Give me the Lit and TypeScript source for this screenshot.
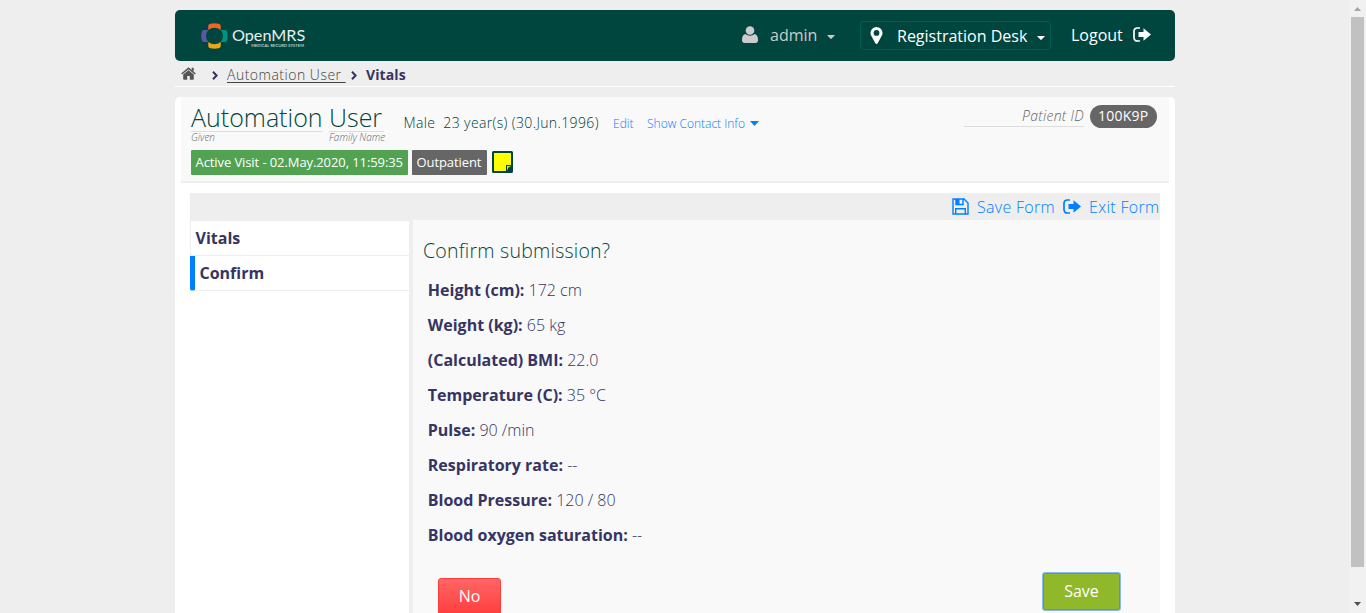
import { LitElement, html, css, svg } from "lit";
import { customElement } from "lit/decorators.js";

const signOut = svg`
  <path d="M7 1H4.2A3.2 3.2 0 0 0 1 4.2v6.6A3.2 3.2 0 0 0 4.2 14H7" fill="none" stroke="currentColor" stroke-width="1.7"/>
  <path d="M5.500 5h5V1.2L18 7.500l-7.500 6.300V10h-5z" fill="currentColor"/>`;

const vitals: [string, string][] = [
  ["Height (cm):", "172 cm"],
  ["Weight (kg):", "65 kg"],
  ["(Calculated) BMI:", "22.0"],
  ["Temperature (C):", "35 °C"],
  ["Pulse:", "90 /min"],
  ["Respiratory rate:", "--"],
  ["Blood Pressure:", "120 / 80"],
  ["Blood oxygen saturation:", "--"],
];

@customElement("app-root")
export class AppRoot extends LitElement {
  static styles = css`
    :host {
      display: flex;
      height: 613px;
      overflow: hidden;
      background: #eee;
      font-family: "Open Sans", sans-serif;
      font-size: 16px;
      font-weight: 300;
      color: #363463;
      white-space: nowrap;
    }
    * { box-sizing: border-box; }
    svg { display: block; flex: none; }
    .page { flex: 1; padding: 10px 174px 0 175px; min-width: 0; }
    .top {
      height: 51px;
      background: #00463f;
      border-radius: 5px;
      display: flex;
      align-items: center;
      color: #fff;
      font-weight: 400;
      padding: 0 24px 1px 26px;
    }
    .logo { margin-top: 1px; }
    .brand { margin-left: 4px; padding-top: 4px; width: 74px; color: #e8efee; }
    .name { font: 400 16.200px/17px Lato, sans-serif; height: 18px; }
    .tag { font: 400 4px/4px Lato, sans-serif; text-align: right; padding-right: 2px; letter-spacing: 0.1px; }
    .spacer { flex: 1; }
    .user { color: #ccc; display: flex; align-items: center; width: 118px; }
    .user span { margin-left: 12px; width: 57px; }
    .user svg { margin-top: -1px; }
    .user .caret { margin-top: 4px; }
    .place {
      display: flex;
      align-items: center;
      width: 191px;
      height: 29px;
      border: 1px solid #005e50;
      border-radius: 3px;
      padding-left: 9px;
      margin-top: 1px;
    }
    .place svg { margin-top: -1px; }
    .place span { margin-left: 14px; width: 140px; }
    .place .caret { margin-top: 4px; }
    .logout { margin-left: 20px; width: 62px; }
    .out { margin-top: -2px; }
    .crumbs {
      height: 26px;
      border-bottom: 1px solid #fff;
      display: flex;
      align-items: center;
      font-size: 14px;
      padding: 2px 0 0 6px;
    }
    .crumbs u { color: #444; width: 118px; margin: 0 6px 0 9px; text-underline-offset: 2px; white-space: pre; letter-spacing: 0.5px; }
    .crumbs b { font-weight: 700; margin-left: 9px; letter-spacing: 0.1px; }
    .chev { margin-top: 2px; }
    .home { margin-right: 16px; margin-top: -3px; }
    .panel { margin-top: 10px; height: 530px; background: #fff; border-radius: 5px; padding: 0 6px; }
    .patient {
      height: 86px;
      background: #f9f9f9;
      border-bottom: 2px solid #eee;
      padding: 6px 12px 0 10px;
      color: #00463f;
    }
    .id-row { display: flex; height: 47px; }
    .part { display: flex; flex-direction: column; }
    .part h1 { margin: 0; font-size: 25px; font-weight: 300; line-height: 28px; height: 29px; border-bottom: 1px solid #ddd; }
    .part em, .pid em { color: #666; }
    .part em { font-size: 10px; line-height: 11px; }
    .given { width: 132px; margin-right: 6px; }
    .family { width: 55px; }
    .gender { font-size: 14px; line-height: 20px; padding-top: 10px; margin-left: 19.500px; width: 209.500px; white-space: pre; letter-spacing: 0.37px; color: #003c36; }
    .link { color: #007fff; font-size: 12px; line-height: 20px; padding-top: 11px; }
    .edit { width: 34px; }
    .contact { width: 103px; }
    .down { margin-top: 18px; }
    .pid { width: 120px; height: 24px; border-bottom: 1px solid #ddd; text-align: right; font-size: 14px; line-height: 26px; letter-spacing: 0.3px; }
    .badge {
      margin: 2px 0 0 6px;
      width: 67px;
      height: 23px;
      line-height: 22px;
      border-radius: 12px;
      background: #666;
      color: #fff;
      padding-left: 8px;
      font-size: 14px;
      font-weight: 400;
      letter-spacing: 0.25px;
    }
    .tags { display: flex; color: #fff; font-size: 13px; font-weight: 400; line-height: 25px; letter-spacing: -0.09px; }
    .tags span { height: 25px; margin-right: 4px; padding-left: 4.500px; border-radius: 1px; }
    .visit { width: 217px; background: #51a351; }
    .outp { width: 75px; background: #666; }
    .note { margin: 1px 0 0 1px; }
    .bar {
      margin: 10px 9px 0;
      height: 27px;
      background: #eee;
      display: flex;
      justify-content: flex-end;
      align-items: center;
      color: #007fff;
      letter-spacing: 0.3px;
    }
    .disk { margin-top: -1px; }
    .save-link { margin-left: 8px; width: 86px; }
    .exit-link { margin-left: 8px; width: 71px; }
    .body { display: flex; margin: 0 9px; height: 393px; }
    nav { width: 219px; border-top: 1px solid #eee; font-weight: 700; }
    nav div { height: 35px; line-height: 34px; border-bottom: 1px solid #eee; padding-left: 4.500px; border-left: 1px solid #eee; }
    nav .on { border-left: 5px solid #007fff; border-bottom-left-radius: 3px; }
    .form { flex: 1; border-left: 4px solid #eee; background: #f9f9f9; padding: 16px 39px 0 10px; }
    h3 { margin: 0 0 7px; font-size: 19.500px; letter-spacing: 0.24px; line-height: 30px; font-weight: 300; color: #00463f; }
    .row { height: 35px; line-height: 34px; padding-left: 4.800px; }
    .row b { font-weight: 700; }
    .actions { display: flex; justify-content: space-between; padding-left: 15px; margin-top: 19px; color: #fff; font-weight: 400; text-align: center; }
    .no {
      margin-top: 6px;
      width: 63px;
      height: 38px;
      line-height: 34px;
      border: 1px solid #ff3d3d;
      border-radius: 3px;
      background: linear-gradient(#ff6666, #ff3d3d);
    }
    .yes {
      width: 79px;
      height: 39px;
      line-height: 37px;
      border: 1px solid #8bb8f4;
      box-shadow: inset 0 0 0 1px #5e9a86;
      border-radius: 3px;
      background: #8fb82a;
    }
    .scroll { width: 17px; background: #f1f1f1; display: flex; flex-direction: column; align-items: center; }
    .thumb { width: 13px; height: 550px; background: #c1c1c1; }
  `;

  private caret() {
    return html`<svg class="caret" width="8" height="4" viewBox="0 0 8 4"><path d="M.6 0h6.800q.6 0 .2.500L4.400 3.700q-.4.400-.8 0L.4.500Q0 0 .6 0z" fill="currentColor"/></svg>`;
  }

  private chevron() {
    return html`<svg class="chev" width="6" height="9" viewBox="0 0 6 9"><path d="M1 .8 4.600 4.500 1 8.200" fill="none" stroke="#363463" stroke-width="2"/></svg>`;
  }

  render() {
    return html`
      <div class="page">
        <header class="top">
          <svg class="logo" width="27" height="26" viewBox="0 0 26 26" preserveAspectRatio="none">
            <path d="M7 7V3Q7 1 9 .7q4-.9 8 0 2 .3 2 2.300v4Q13 2.500 7 7z" fill="#f26522"/>
            <path d="M7 19v4q0 2 2 2.300 4 .9 8 0 2-.3 2-2.300v-4q-6 4.500-12 0z" fill="#eea616"/>
            <path d="M7 7H3Q1 7 .7 9q-.9 4 0 8 .3 2 2.300 2h4Q2.500 13 7 7z" fill="#5b57a6"/>
            <path d="M19 7h4q2 0 2.300 2 .9 4 0 8-.3 2-2.300 2h-4q4.500-6 0-12z" fill="#009384"/>
          </svg>
          <div class="brand"><div class="name">OpenMRS</div><div class="tag">MEDICAL RECORD SYSTEM</div></div>
          <div class="spacer"></div>
          <div class="user">
            <svg width="16" height="17" viewBox="0 0 16 17"><path d="M3.300 8C1 8.500 0 11 0 14q0 3 2.700 3h10.600Q16 17 16 14c0-3-1-5.500-3.300-6Q8 11.500 3.300 8z" fill="currentColor"/><circle cx="8" cy="4.500" r="4.300" fill="currentColor"/></svg>
            <span>admin</span>${this.caret()}
          </div>
          <div class="place">
            <svg width="13" height="17" viewBox="0 0 12 17"><path fill-rule="evenodd" d="M6 0a6 6 0 0 1 6 6q0 1.300-.5 2.300L7.200 16.200q-1.200 1.500-2.400 0L.5 8.300Q0 7.300 0 6a6 6 0 0 1 6-6zm0 3a2.900 2.900 0 1 0 0 5.800A2.900 2.900 0 0 0 6 3z" fill="#fff"/></svg>
            <span>Registration Desk</span>${this.caret()}
          </div>
          <span class="logout">Logout</span>
          <svg class="out" width="18" height="15" viewBox="0 0 18 15">${signOut}</svg>
        </header>
        <div class="crumbs">
          <svg class="home" width="15" height="13" viewBox="0 0 15 13"><path d="M7.500 3.200 2.200 7.600V12q0 .7.7.7h3.300V9h2.600v3.700h3.300q.7 0 .7-.7V7.600z" fill="#555"/><path d="M.6 7 7.500 1.300 14.400 7" fill="none" stroke="#555" stroke-width="1.500"/><path d="M10.700.8h2v4l-2-1.600z" fill="#555"/></svg>
          ${this.chevron()}<u>Automation User </u>${this.chevron()}<b>Vitals</b>
        </div>
        <main class="panel">
          <section class="patient">
            <div class="id-row">
              <div class="part given"><h1>Automation</h1><em>Given</em></div>
              <div class="part family"><h1>User</h1><em>Family Name</em></div>
              <div class="gender">Male  23 year(s) (30.Jun.1996)</div>
              <div class="link edit">Edit</div>
              <div class="link contact">Show Contact Info</div>
              <svg class="down" width="9" height="5" viewBox="0 0 9 5"><path d="M0 0h9L4.500 5z" fill="#007fff"/></svg>
              <div class="spacer"></div>
              <div class="pid"><em>Patient ID</em></div>
              <div class="badge">100K9P</div>
            </div>
            <div class="tags">
              <span class="visit">Active Visit - 02.May.2020, 11:59:35</span>
              <span class="outp">Outpatient</span>
              <svg class="note" width="21" height="22" viewBox="0 0 21 22"><rect x="1" y="1" width="19" height="20" fill="#ff0"/><path fill-rule="evenodd" d="M1.500 0h18q1.500 0 1.500 1.500v19q0 1.500-1.500 1.500h-18Q0 22 0 20.500v-19Q0 0 1.500 0zM2 2v18h12v-6h5V2z" fill="#00463f"/><path d="M15 15h4l-2.500 1.500L15 19.500z" fill="#e0e600"/></svg>
            </div>
          </section>
          <div class="bar">
            <svg class="disk" width="17" height="17" viewBox="0 0 17 17"><g fill="none" stroke="#007fff" stroke-width="1.400"><path d="M1 1h11l4 4v11H1z"/><path d="M4 1v5.500h7V1M3.700 16v-5.300h9.600V16"/></g><path d="M4 1h3.500v5.500H4z" fill="#007fff"/></svg>
            <span class="save-link">Save Form</span>
            <svg width="18" height="15" viewBox="0 0 18 15">${signOut}</svg>
            <span class="exit-link">Exit Form</span>
          </div>
          <div class="body">
            <nav><div>Vitals</div><div class="on">Confirm</div></nav>
            <section class="form">
              <h3>Confirm submission?</h3>
              ${vitals.map(([k, v]) => html`<div class="row"><b>${k}</b> ${v}</div>`)}
              <div class="actions"><div class="no">No</div><div class="yes">Save</div></div>
            </section>
          </div>
        </main>
      </div>
      <div class="scroll">
        <svg width="17" height="17" viewBox="0 0 17 17"><path d="M5 11h7L8.500 7z" fill="#a3a3a3"/></svg>
        <div class="thumb"></div>
        <div class="spacer"></div>
        <svg width="17" height="17" viewBox="0 0 17 17"><path d="M5 6h7l-3.500 4z" fill="#505050"/></svg>
      </div>
    `;
  }
}
